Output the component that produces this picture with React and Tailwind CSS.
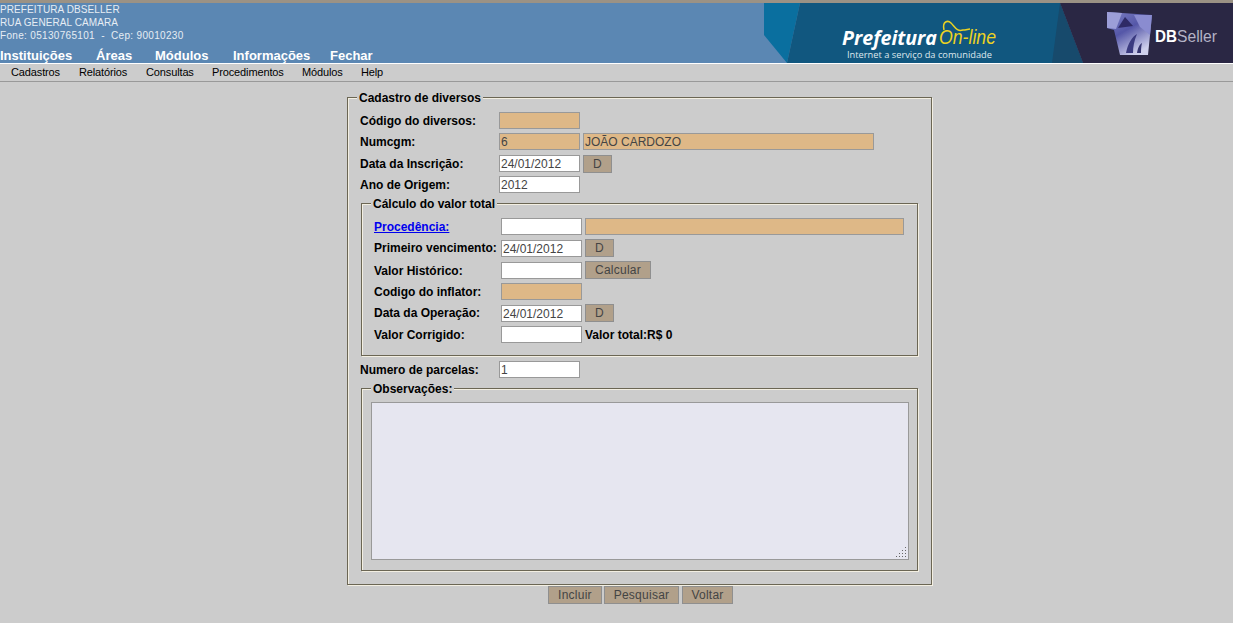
const orange = "bg-[#deb887]";
const inputBase = "block h-[17px] border border-[#999] px-[1px] text-[12px] leading-[15px] text-[#444] outline-none box-border";

function Input({ value = "", width = "w-[81px]", bg = "bg-white" }) {
  return <input readOnly value={value} className={`${inputBase} ${width} ${bg}`} />;
}

function Btn({ children, width }) {
  return (
    <button className={`block h-[18px] ${width} box-border border border-[#8f8f8f] bg-[#b1a08a] text-[12px] leading-[15px] tracking-[0.25px] text-[#444] text-center`}>
      {children}
    </button>
  );
}

function Row({ label, labelWidth = "w-[139px]", height = "h-[21px]", children }) {
  return (
    <div className={`flex items-start ${height}`}>
      <div className={`${labelWidth} shrink-0 text-[12px] font-bold leading-[18px] text-black`}>{label}</div>
      <div className="flex items-start">{children}</div>
    </div>
  );
}

function Box({ title, className, legendClass = "ml-[-3px]", children }) {
  return (
    <fieldset className={`box-border border border-[#6b6654] shadow-[1px_1px_0_#f3efe2,inset_1px_1px_0_#f3efe2] ${className}`}>
      <legend className={`${legendClass} bg-[#cccccc] px-[2px] text-[12px] font-bold leading-[14px] text-black`}>
        <span className="relative top-[1px]">{title}</span>
      </legend>
      {children}
    </fieldset>
  );
}

function Banner() {
  return (
    <svg width="469" height="60" viewBox="0 0 469 60" className="shrink-0">
      <defs>
        <linearGradient id="cube" x1="0" y1="0" x2="0.6" y2="1">
          <stop offset="0" stopColor="#7d80c4" />
          <stop offset="0.5" stopColor="#5557a8" />
          <stop offset="1" stopColor="#cfd0ec" />
        </linearGradient>
        <filter id="soft">
          <feGaussianBlur stdDeviation="0.6" />
        </filter>
      </defs>
      <rect width="469" height="60" fill="#5b87b3" />
      <polygon points="0,0 36,0 23,60 0,32" fill="#0a6f9f" />
      <polygon points="36,0 296,0 319,60 23,60" fill="#11577f" />
      <polygon points="296,0 288,60 319,60" fill="#174a6c" />
      <polygon points="296,0 469,0 469,60 319,60" fill="#2a2744" />
      {/* dbseller cube */}
      <g filter="url(#soft)">
        <polygon points="343,9 388,12 384,52 356,52 350,27 343,25" fill="url(#cube)" />
        <polygon points="343,9 358,10 352,26 343,25" fill="#9c9ed8" />
        <polygon points="361,14 369,23 354,25" fill="#2d2a66" />
        <polygon points="370,12 388,12 386,32 376,24" fill="#8a8cd0" />
        <path d="M362 50 C364 40 368 34 373 31 C370 38 369 44 369 50 Z" fill="#3b3a80" />
        <path d="M373 50 C374 44 376 41 378 40 C377 44 377 47 377 50 Z" fill="#35346f" />
      </g>
      <text x="78" y="42" fontFamily="'Open Sans', 'Liberation Sans', sans-serif" fontSize="19" fontStyle="italic" fontWeight="700" fill="#fff" textLength="95" lengthAdjust="spacingAndGlyphs">Prefeitura</text>
      <text x="175" y="41" fontFamily="'Liberation Sans', sans-serif" fontSize="20" fontStyle="italic" fill="#ecd222" textLength="57" lengthAdjust="spacingAndGlyphs">On-line</text>
      <path d="M180 27 C178 18 184 17 187 20 C191 24 193 29 199 27 C202 27 204 26 206 26" fill="none" stroke="#ecd222" strokeWidth="1.5" />
      <text x="83" y="55" fontFamily="'Open Sans', 'Liberation Sans', sans-serif" fontSize="9.5" fill="#dfe8ee" textLength="145" lengthAdjust="spacingAndGlyphs">Internet a serviço da comunidade</text>
      <text x="391" y="39" fontFamily="'Liberation Sans', sans-serif" fontSize="16" fontWeight="700" fill="#fff" textLength="22" lengthAdjust="spacingAndGlyphs">DB</text>
      <text x="413" y="39" fontFamily="'Liberation Sans', sans-serif" fontSize="16" fill="#b4b3c6" textLength="40" lengthAdjust="spacingAndGlyphs">Seller</text>
    </svg>
  );
}

export default function App() {
  return (
    <div className="min-h-[623px] bg-[#cccccc] font-['Liberation_Sans',Arial,sans-serif]">
      <div className="h-[3px] bg-[#9b9285]" />
      <header className="flex h-[60px] justify-between bg-[#5b87b3]">
        <div>
          <div className="text-[10px] leading-[13px] text-[#e6edf4]">
            <div className="tracking-[0.1px]">PREFEITURA DBSELLER</div>
            <div className="tracking-[0.1px]">RUA GENERAL CAMARA</div>
            <div className="tracking-[0.32px]">Fone: 05130765101 &nbsp;-&nbsp; Cep: 90010230</div>
          </div>
          <nav className="mt-[6px] flex text-[13px] font-bold leading-[15px] text-white">
            <span className="w-[96px]">Instituições</span>
            <span className="w-[59px]">Áreas</span>
            <span className="w-[78px]">Módulos</span>
            <span className="w-[97px]">Informações</span>
            <span>Fechar</span>
          </nav>
        </div>
        <Banner />
      </header>
      <div className="flex h-[19px] items-center border-t border-b border-t-white border-b-[#999] pl-[11px] text-[11px] tracking-[-0.13px] text-black">
        <span className="w-[68px]">Cadastros</span>
        <span className="w-[67px]">Relatórios</span>
        <span className="w-[66px]">Consultas</span>
        <span className="w-[90px]">Procedimentos</span>
        <span className="w-[59px]">Módulos</span>
        <span>Help</span>
      </div>

      <main className="pl-[347px] pt-[8px]">
        <Box title="Cadastro de diversos" className="h-[495px] w-[585px] pl-[12px] pt-[8px]">
          <Row label="Código do diversos:"><Input bg={orange} /></Row>
          <Row label="Numcgm:" height="h-[22px]">
            <Input value="6" bg={orange} />
            <Input value="JOÃO CARDOZO" width="w-[291px] ml-[3px]" bg={orange} />
          </Row>
          <Row label="Data da Inscrição:">
            <Input value="24/01/2012" />
            <div className="ml-[3px]"><Btn width="w-[29px]">D</Btn></div>
          </Row>
          <Row label="Ano de Origem:" height="h-[20px]"><Input value="2012" /></Row>

          <Box title="Cálculo do valor total" className="ml-[1px] h-[160px] w-[557px] pl-[12px] pt-[8px]">
            <Row label={<a href="#" className="text-[#0000ee] underline">Procedência:</a>} labelWidth="w-[127px]" height="h-[22px]">
              <Input />
              <Input width="w-[319px] ml-[3px]" bg={orange} />
            </Row>
            <Row label={<span className="mt-[-1px] block">Primeiro vencimento:</span>} labelWidth="w-[127px]" height="h-[22px]">
              <Input value="24/01/2012" />
              <div className="ml-[3px] mt-[-1px]"><Btn width="w-[29px]">D</Btn></div>
            </Row>
            <Row label="Valor Histórico:" labelWidth="w-[127px]">
              <Input />
              <div className="ml-[3px] mt-[-1px]"><Btn width="w-[66px]">Calcular</Btn></div>
            </Row>
            <Row label="Codigo do inflator:" labelWidth="w-[127px]" height="h-[22px]"><Input bg={orange} /></Row>
            <Row label={<span className="mt-[-1px] block">Data da Operação:</span>} labelWidth="w-[127px]">
              <Input value="24/01/2012" />
              <div className="ml-[3px] mt-[-1px]"><Btn width="w-[29px]">D</Btn></div>
            </Row>
            <Row label="Valor Corrigido:" labelWidth="w-[127px]">
              <Input />
              <span className="ml-[3px] text-[12px] font-bold leading-[18px] text-black">Valor total:R$ 0</span>
            </Row>
          </Box>

          <div className="mt-[5px]">
            <Row label="Numero de parcelas:" height="h-[20px]"><Input value="1" /></Row>
          </div>

          <Box title="Observações:" className="ml-[1px] h-[190px] w-[557px] pl-[9px] pt-[7px]" legendClass="ml-[0px]">
            <div className="relative h-[158px] w-[538px]">
              <textarea readOnly className="box-border block h-full w-full resize-none border border-[#999] bg-[#e6e6f0] outline-none" />
              <svg width="12" height="12" viewBox="0 0 12 12" className="absolute bottom-[2px] right-[2px]">
                <g fill="#666">
                  <rect x="10" y="1" width="1" height="1" />
                  <rect x="7" y="4" width="1" height="1" />
                  <rect x="10" y="4" width="1" height="1" />
                  <rect x="4" y="7" width="1" height="1" />
                  <rect x="7" y="7" width="1" height="1" />
                  <rect x="10" y="7" width="1" height="1" />
                  <rect x="1" y="10" width="1" height="1" />
                  <rect x="4" y="10" width="1" height="1" />
                  <rect x="7" y="10" width="1" height="1" />
                  <rect x="10" y="10" width="1" height="1" />
                </g>
              </svg>
            </div>
          </Box>
        </Box>

        <div className="ml-[201px] mt-[1px] flex gap-[2px]">
          <Btn width="w-[54px]">Incluir</Btn>
          <Btn width="w-[75px]">Pesquisar</Btn>
          <div className="ml-[1px]"><Btn width="w-[51px]">Voltar</Btn></div>
        </div>
      </main>
    </div>
  );
}
